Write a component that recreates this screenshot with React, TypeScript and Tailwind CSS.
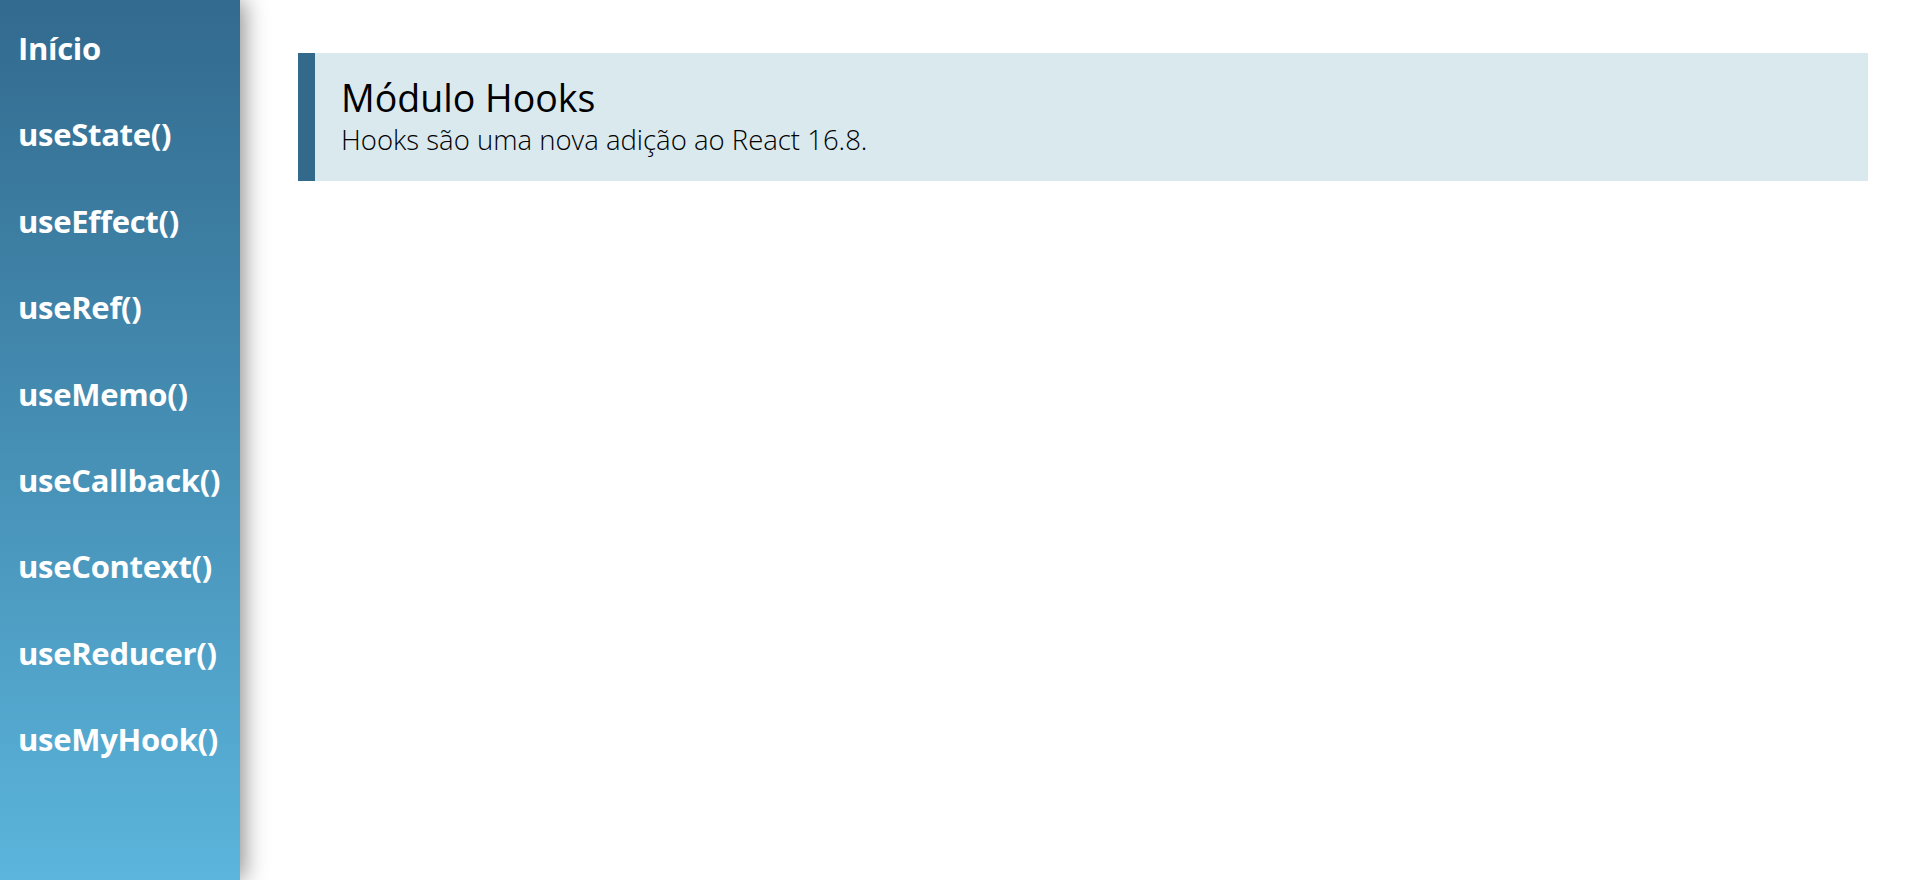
import React from "react";

const items = [
  "Início",
  "useState()",
  "useEffect()",
  "useRef()",
  "useMemo()",
  "useCallback()",
  "useContext()",
  "useReducer()",
  "useMyHook()",
];

export default function App() {
  return (
    <div
      className="flex min-h-[880px] w-full bg-white"
      style={{ fontFamily: '"Open Sans", "Noto Sans", sans-serif' }}
    >
      <nav className="relative z-10 w-[240px] shrink-0 min-h-[880px] bg-gradient-to-b from-[#326a8e] to-[#5bb5dc] pt-[5px] shadow-[4px_0_22px_rgba(0,0,0,0.45)]">
        <ul>
          {items.map((t) => (
            <li
              key={t}
              className="h-[86.4px] pl-[18px] text-[31px] leading-[86.4px] font-bold text-white tracking-[-0.3px]"
            >
              {t}
            </li>
          ))}
        </ul>
      </nav>
      <main className="flex-1 pt-[53px] pl-[58px] pr-[52px]">
        <section className="h-[128px] border-l-[17px] border-[#33698b] bg-[#d9e9ee] pl-[26px] pt-[23px]">
          <h1 className="text-[37.5px] leading-[44px] font-normal text-black">
            Módulo Hooks
          </h1>
          <p className="mt-[4px] text-[27.5px] leading-[32px] font-light text-black">
            Hooks são uma nova adição ao React 16.8.
          </p>
        </section>
      </main>
    </div>
  );
}
